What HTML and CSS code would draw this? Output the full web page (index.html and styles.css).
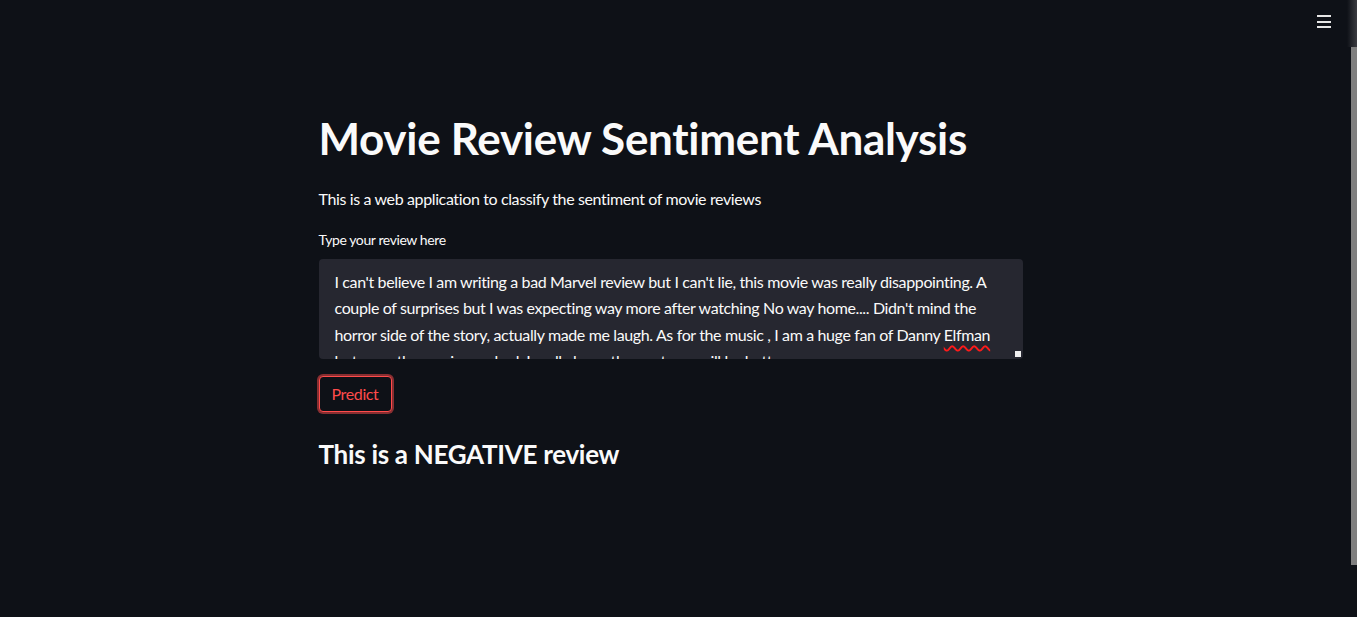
FILE: index.html
```html
<!DOCTYPE html>
<html lang="en">
<head>
<meta charset="utf-8">
<title>Movie Review Sentiment Analysis</title>
<link rel="stylesheet" href="styles.css">
</head>
<body>
<div class="app">
  <header class="topbar">
    <button class="menu" aria-label="Menu">
      <span></span><span></span><span></span>
    </button>
  </header>
  <main class="main">
    <h1 class="title">Movie Review Sentiment Analysis</h1>
    <p class="subtitle">This is a web application to classify the sentiment of movie reviews</p>
    <label class="label">Type your review here</label>
    <div class="textarea">
      <div class="ta-text">I can't believe I am writing a bad Marvel review but I can't lie, this movie was really disappointing. A couple of surprises but I was expecting way more after watching No way home.... Didn't mind the horror side of the story, actually made me laugh. As for the music , I am a huge fan of Danny <span class="spell">Elfman</span> but even the music was bad. I really hope the next one will be better.</div>
      <span class="resize"></span>
    </div>
    <button class="predict">Predict</button>
    <h3 class="result">This is a NEGATIVE review</h3>
  </main>
  <div class="scroll-top"></div>
  <div class="scroll-thumb"></div>
</div>
</body>
</html>
```

FILE: styles.css
```css
html, body {
  margin: 0;
  padding: 0;
  height: 100%;
  overflow: hidden;
}
body {
  background: #0e1117;
  color: #fafafa;
  font-family: "Lato", "Noto Sans", sans-serif;
}
.app {
  position: relative;
  height: 617px;
}
.topbar {
  height: 46px;
  display: flex;
  justify-content: flex-end;
  align-items: flex-start;
  padding-right: 26px;
}
.menu {
  margin-top: 15px;
  width: 14px;
  height: 13px;
  padding: 0;
  border: 0;
  background: transparent;
  display: flex;
  flex-direction: column;
  justify-content: space-between;
  cursor: pointer;
}
.menu span {
  display: block;
  height: 2px;
  background: #e6e6e6;
}
.main {
  width: 704px;
  margin: 0 auto;
  padding-top: 66px;
  box-sizing: border-box;
  transform: translateX(-8px);
}
.title {
  margin: 0;
  font-size: 44px;
  font-weight: 700;
  line-height: 1.2;
  letter-spacing: -0.3px;
}
.subtitle {
  margin: 21px 0 0;
  font-size: 16px;
  line-height: 1.6;
  letter-spacing: -0.37px;
}
.label {
  display: block;
  margin-top: 18px;
  font-size: 14px;
  line-height: 1.6;
  letter-spacing: -0.4px;
}
.textarea {
  position: relative;
  margin-top: 7px;
  height: 100px;
  background: #262730;
  border-radius: 4px;
  overflow: hidden;
}
.ta-text {
  padding: 10px 16px;
  font-size: 16px;
  line-height: 26.5px;
  letter-spacing: -0.37px;
  color: #fafafa;
}
.spell {
  text-decoration-line: underline;
  text-decoration-style: wavy;
  text-decoration-color: #ff1a1a;
  text-decoration-thickness: 1.5px;
  text-underline-offset: 4px;
}
.resize {
  position: absolute;
  right: 2px;
  bottom: 2px;
  width: 6px;
  height: 6px;
  background: #f0f0f0;
}
.predict {
  margin-top: 17px;
  display: block;
  height: 36px;
  padding: 0 12px;
  background: #0e1117;
  color: #ff4b4b;
  font-family: inherit;
  font-size: 16px;
  letter-spacing: -0.37px;
  border: 1px solid #ff4b4b;
  border-radius: 4px;
  box-shadow: 0 0 0 2px rgba(255, 75, 75, 0.5);
}
.result {
  margin: 26px 0 0;
  font-size: 26px;
  font-weight: 700;
  line-height: 1.3;
  letter-spacing: -0.3px;
}
.scroll-top {
  position: absolute;
  top: 0;
  right: 0;
  width: 10px;
  height: 47px;
  background: linear-gradient(to right, #0e1117, #3a3b40);
}
.scroll-thumb {
  position: absolute;
  top: 47px;
  right: 0;
  width: 6px;
  height: 518px;
  background: #7f7f7f;
}
```
